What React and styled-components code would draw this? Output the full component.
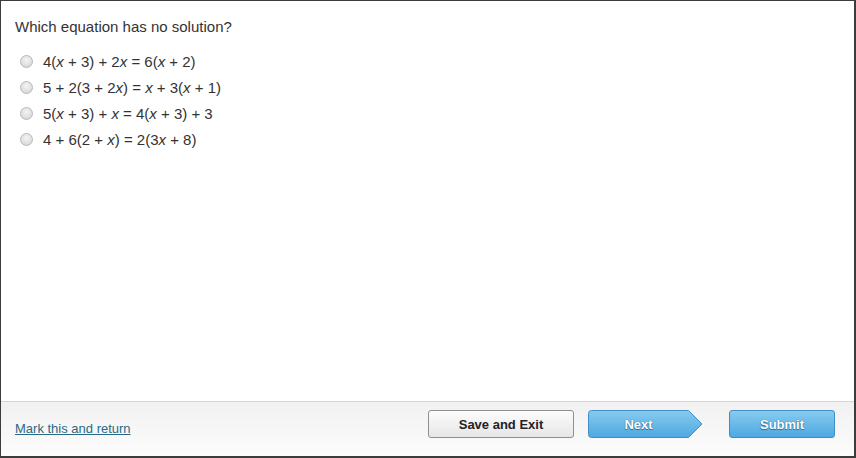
import React from "react";
import styled, { createGlobalStyle } from "styled-components";

const Global = createGlobalStyle`
  html, body { margin: 0; padding: 0; background: #fff; }
  body { font-family: "Liberation Sans", Arial, sans-serif; }
`;

const Frame = styled.div`
  width: 856px;
  height: 458px;
  box-sizing: border-box;
  border-style: solid;
  border-color: #3c3c3c;
  border-width: 1px 2px 2px 1px;
  display: flex;
  flex-direction: column;
  background: #fff;
`;

const Body = styled.div`
  flex: 1;
  padding: 17px 14px 0 14px;
`;

const Question = styled.div`
  font-size: 15px;
  color: #333;
  line-height: 18px;
  margin-bottom: 16px;
`;

const Options = styled.div`
  display: flex;
  flex-direction: column;
  gap: 8px;
`;

const Option = styled.label`
  display: flex;
  align-items: center;
  height: 18px;
  font-size: 15px;
  color: #333;
`;

const Radio = styled.span`
  width: 11px;
  height: 11px;
  border-radius: 50%;
  border: 1px solid #b8b8b8;
  background: radial-gradient(circle at 50% 35%, #f4f4f4 0%, #dcdcdc 70%, #cfcfcf 100%);
  margin: 0 10px 0 5px;
  flex: none;
`;

const Footer = styled.div`
  height: 55px;
  border-top: 1px solid #d6d6d6;
  background: linear-gradient(#f1f1f1, #fcfcfc);
  display: flex;
  align-items: flex-start;
  padding: 8px 19px 0 14px;
  box-sizing: border-box;
`;

const Link = styled.a`
  font-size: 13px;
  color: #2b6a86;
  text-decoration: underline;
  margin-top: 11px;
  flex: 1;
  cursor: pointer;
`;

const Buttons = styled.div`
  display: flex;
  align-items: center;
  gap: 14px;
`;

const BaseBtn = styled.button`
  height: 28px;
  font-family: "Liberation Sans", Arial, sans-serif;
  font-weight: bold;
  font-size: 13px;
  border-radius: 3px;
  box-sizing: border-box;
  cursor: pointer;
  padding: 0;
`;

const GrayBtn = styled(BaseBtn)`
  width: 146px;
  border: 1px solid #8f8f8f;
  color: #222;
  background: linear-gradient(#fcfcfc, #e6e6e6);
`;

const BlueBtn = styled(BaseBtn)`
  width: ${(p) => p.$w}px;
  border: 1px solid #3f8fc4;
  color: #fff;
  text-shadow: 0 0 1px #2d6b98, 0 1px 1px #2d6b98;
  background: linear-gradient(#86cbf0, #4ea8e0);
`;

const ArrowWrap = styled.div`
  position: relative;
  width: 115px;
  height: 28px;
  margin-right: 12px;
`;

const ArrowLabel = styled.span`
  position: absolute;
  left: 0;
  top: 0;
  width: 101px;
  height: 28px;
  display: flex;
  align-items: center;
  justify-content: center;
  font-weight: bold;
  font-size: 13px;
  color: #fff;
  text-shadow: 0 0 1px #2d6b98, 0 1px 1px #2d6b98;
`;

const I = styled.i`
  font-style: italic;
`;

function NextButton() {
  return (
    <ArrowWrap>
      <svg width="115" height="28" viewBox="0 0 115 28">
        <defs>
          <linearGradient id="ng" x1="0" y1="0" x2="0" y2="1">
            <stop offset="0" stopColor="#86cbf0" />
            <stop offset="1" stopColor="#4ea8e0" />
          </linearGradient>
        </defs>
        <path
          d="M3.5 0.5 H100.5 L114 14 L100.5 27.5 H3.5 Q0.5 27.5 0.5 24.5 V3.5 Q0.5 0.5 3.5 0.5 Z"
          fill="url(#ng)"
          stroke="#3f8fc4"
          strokeWidth="1"
        />
      </svg>
      <ArrowLabel>Next</ArrowLabel>
    </ArrowWrap>
  );
}

export default function App() {
  return (
    <>
      <Global />
      <Frame>
        <Body>
          <Question>Which equation has no solution?</Question>
          <Options>
            <Option>
              <Radio />
              <span>4(<I>x</I> + 3) + 2<I>x</I> = 6(<I>x</I> + 2)</span>
            </Option>
            <Option>
              <Radio />
              <span>5 + 2(3 + 2<I>x</I>) = <I>x</I> + 3(<I>x</I> + 1)</span>
            </Option>
            <Option>
              <Radio />
              <span>5(<I>x</I> + 3) + <I>x</I> = 4(<I>x</I> + 3) + 3</span>
            </Option>
            <Option>
              <Radio />
              <span>4 + 6(2 + <I>x</I>) = 2(3<I>x</I> + 8)</span>
            </Option>
          </Options>
        </Body>
        <Footer>
          <Link>Mark this and return</Link>
          <Buttons>
            <GrayBtn>Save and Exit</GrayBtn>
            <NextButton />
            <BlueBtn $w={106}>Submit</BlueBtn>
          </Buttons>
        </Footer>
      </Frame>
    </>
  );
}
